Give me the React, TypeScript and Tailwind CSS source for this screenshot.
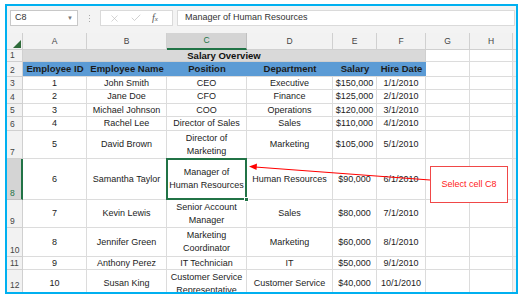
import { X, Check } from "lucide-react";

type Cell = string | string[];

const dataRows: { n: number; cells: Cell[] }[] = [
  { n: 3, cells: ["1", "John Smith", "CEO", "Executive", "$150,000", "1/1/2010"] },
  { n: 4, cells: ["2", "Jane Doe", "CFO", "Finance", "$125,000", "2/1/2010"] },
  { n: 5, cells: ["3", "Michael Johnson", "COO", "Operations", "$120,000", "3/1/2010"] },
  { n: 6, cells: ["4", "Rachel Lee", "Director of Sales", "Sales", "$110,000", "4/1/2010"] },
  { n: 7, cells: ["5", "David Brown", ["Director of", "Marketing"], "Marketing", "$105,000", "5/1/2010"] },
  { n: 8, cells: ["6", "Samantha Taylor", ["Manager of", "Human Resources"], "Human Resources", "$90,000", "6/1/2010"] },
  { n: 9, cells: ["7", "Kevin Lewis", ["Senior Account", "Manager"], "Sales", "$80,000", "7/1/2010"] },
  { n: 10, cells: ["8", "Jennifer Green", ["Marketing", "Coordinator"], "Marketing", "$60,000", "8/1/2010"] },
  { n: 11, cells: ["9", "Anthony Perez", "IT Technician", "IT", "$50,000", "9/1/2010"] },
  { n: 12, cells: ["10", "Susan King", ["Customer Service", "Representative"], "Customer Service", "$40,000", "10/1/2010"] },
];

const headers = ["Employee ID", "Employee Name", "Position", "Department", "Salary", "Hire Date"];
const letters = ["A", "B", "C", "D", "E", "F", "G", "H"];

const cell =
  "flex items-center justify-center text-center border-r border-b border-[#dcdcdc] text-[9px] leading-[13px] text-[#1c1c1c] whitespace-nowrap";
const rowHead =
  "flex items-end pl-[3px] pb-[1px] bg-[#f2f2f2] border-r border-b border-[#d0d0d0] text-[8.5px] leading-[10px] text-[#444]";

function Text({ value }: { value: Cell }) {
  if (Array.isArray(value)) {
    return (
      <span>
        {value[0]}
        <br />
        {value[1]}
      </span>
    );
  }
  return <span>{value}</span>;
}

function Toolbar() {
  return (
    <div className="h-[27px] shrink-0 bg-[#f3f3f3] flex items-start pt-[4px] pl-[1px] pr-[1px]">
      {/* name box */}
      <div className="w-[68px] h-[16px] ml-[2px] bg-white border border-[#c8c8c8] flex items-center justify-between pl-[4px] pr-[4px]">
        <span className="text-[9px] text-[#333]">C8</span>
        <span className="text-[6px] text-[#777]">▼</span>
      </div>
      {/* grip */}
      <div className="w-[22px] h-[16px] flex flex-col items-center justify-center gap-[2px]">
        <div className="w-[1px] h-[1px] bg-[#aaa]" />
        <div className="w-[1px] h-[1px] bg-[#aaa]" />
        <div className="w-[1px] h-[1px] bg-[#aaa]" />
      </div>
      {/* cancel / enter / fx */}
      <div className="w-[73px] h-[16px] bg-white border border-[#dadada] flex items-center pl-[8px] gap-[10px]">
        <X size={11} strokeWidth={1.3} color="#b8b8b8" />
        <Check size={12} strokeWidth={1.3} color="#b8b8b8" />
        <span className="font-['Liberation_Serif',serif] italic text-[10px] text-[#555] leading-none">
          f<span className="text-[7px]">x</span>
        </span>
      </div>
      {/* formula */}
      <div className="flex-1 h-[16px] ml-[4px] bg-white border border-[#dadada] flex items-center pl-[7px]">
        <span className="text-[9px] text-[#333]">Manager of Human Resources</span>
      </div>
    </div>
  );
}

function Sheet() {
  return (
    <div className="grid grid-cols-[16px_64px_80px_80px_86px_44px_49px_44px_43px_1fr] grid-rows-[17px_12px_15px_13px_14px_13px_14px_28px_41px_28px_29px_13px_28px]">
      {/* column headers */}
      <div className="bg-[#f2f2f2] border-r border-b border-[#cfcfcf] flex items-end justify-end pr-[1px] pb-[1px]">
        <svg width="8" height="8" viewBox="0 0 8 8">
          <polygon points="8,0 8,8 0,8" fill="#2f6b3a" />
        </svg>
      </div>
      {letters.map((l) =>
        l === "C" ? (
          <div
            key={l}
            className="bg-[#d4d4d4] border-r border-[#c0c0c0] border-b-2 border-b-[#217346] flex items-center justify-center text-[8.5px] text-[#217346]"
          >
            {l}
          </div>
        ) : (
          <div
            key={l}
            className="bg-[#f2f2f2] border-r border-b border-[#d0d0d0] flex items-center justify-center text-[8.5px] text-[#444]"
          >
            {l}
          </div>
        )
      )}
      <div className="bg-[#f2f2f2] border-b border-[#d0d0d0]" />

      {/* row 1 */}
      <div className={rowHead}>1</div>
      <div className="col-span-6 bg-[#d9d9d9] border-r border-b border-[#cfcfcf] flex items-center justify-center text-[9.5px] font-bold text-[#111] leading-none">
        Salary Overview
      </div>
      <div className={cell} />
      <div className={cell} />
      <div className="border-b border-[#dcdcdc] bg-[#f2f2f2]" />

      {/* row 2 */}
      <div className={rowHead}>2</div>
      {headers.map((h) => (
        <div
          key={h}
          className="bg-[#5b9bd5] border-b border-[#dcdcdc] flex items-center justify-center text-[9.5px] font-bold text-[#1b1b1b] whitespace-nowrap"
        >
          {h}
        </div>
      ))}
      <div className={cell} />
      <div className={cell} />
      <div className="border-b border-[#dcdcdc] bg-[#f2f2f2]" />

      {/* data */}
      {dataRows.map((r) => (
        <div key={r.n} className="contents">
          {r.n === 8 ? (
            <div className="flex items-end pl-[3px] pb-[1px] bg-[#d4d4d4] border-r-2 border-r-[#217346] border-b border-[#c0c0c0] text-[8.5px] leading-[10px] text-[#217346]">
              8
            </div>
          ) : r.n === 12 ? (
            <div className="flex items-end pl-[3px] pb-[7px] bg-[#f2f2f2] border-r border-b border-[#d0d0d0] text-[8.5px] leading-[10px] text-[#444]">
              12
            </div>
          ) : (
            <div className={rowHead}>{r.n}</div>
          )}
          {r.cells.map((c, i) =>
            r.n === 8 && i === 2 ? (
              <div key={i} className={`${cell} relative`}>
                <Text value={c} />
                <div className="absolute -left-[1px] -top-[1px] right-[-1px] bottom-[-1px] border-2 border-[#217346]" />
                <div className="absolute right-[-3px] bottom-[-3px] w-[5px] h-[5px] bg-[#217346] border border-white" />
              </div>
            ) : (
              <div key={i} className={cell}>
                <Text value={c} />
              </div>
            )
          )}
          <div className={cell} />
          <div className={cell} />
          <div className="border-b border-[#dcdcdc] bg-[#f2f2f2]" />
        </div>
      ))}
    </div>
  );
}

function Callout() {
  return (
    <>
      <svg className="absolute left-0 top-0 pointer-events-none" width="525" height="301">
        <line x1="430" y1="180" x2="255" y2="167" stroke="#ff0000" strokeWidth="1.2" />
        <polygon points="249,166.5 257,163.5 256.5,170" fill="#ff0000" />
      </svg>
      <div className="absolute left-[430px] top-[166px] w-[78px] h-[37px] bg-white border border-[#f04848] flex items-center justify-center">
        <span className="text-[9px] text-[#ff2020]">Select cell C8</span>
      </div>
    </>
  );
}

export default function App() {
  return (
    <div className="relative w-[525px] h-[301px] bg-white pl-[5px] pt-[4px] font-['Liberation_Sans',Arial,sans-serif]">
      <div className="w-[513px] h-[290px] border-2 border-[#00b0f0] flex flex-col overflow-hidden bg-white">
        <Toolbar />
        <Sheet />
      </div>
      <Callout />
    </div>
  );
}
